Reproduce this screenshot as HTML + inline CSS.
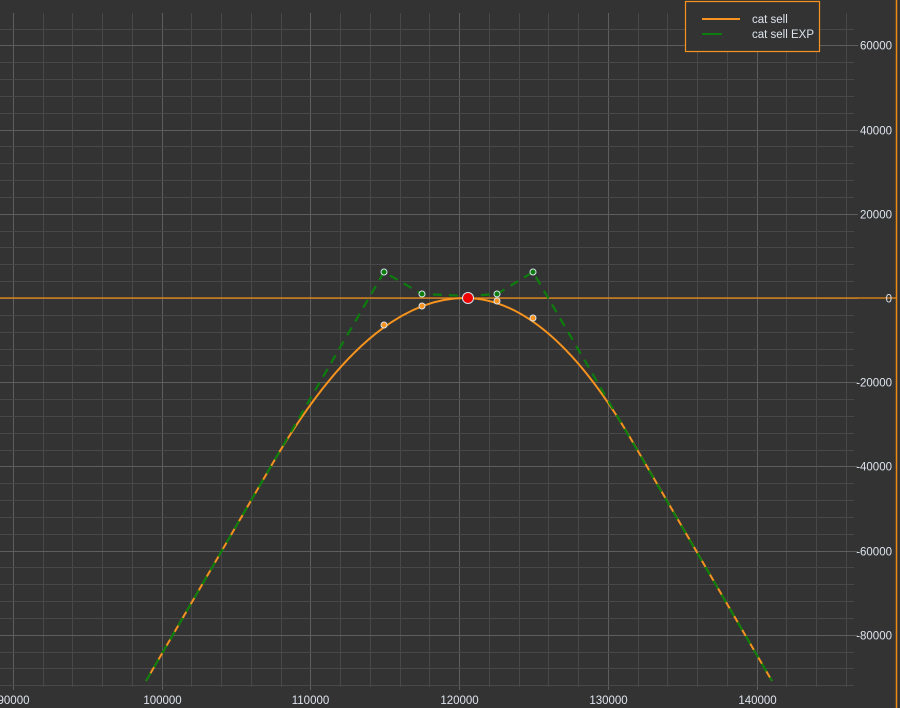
<!DOCTYPE html>
<html><head><style>
html,body{margin:0;padding:0;background:#323232;width:900px;height:708px;overflow:hidden}
svg{display:block}
text{font-family:"Liberation Sans",sans-serif;font-size:11.5px;fill:#dde4ee}
</style></head><body>
<svg id="s" width="900" height="708" xmlns="http://www.w3.org/2000/svg">
<rect width="900" height="708" fill="#333333"/>
<g id="grid"></g>
<line x1="0" y1="298" x2="896" y2="298" stroke="#f08a10" stroke-width="1.2"/>
<line x1="896.5" y1="0" x2="896.5" y2="708" stroke="#f08a10" stroke-width="1.5"/>
<path d="M146,681 L273,462.8 Q369,298 465,298 Q549,298 633,442.5 L772,681" fill="none" stroke="#f7931e" stroke-width="2"/>
<polyline points="146,681 384,272 422,294 468,296 497,294 533,272 772,681" fill="none" stroke="#0d7d0d" stroke-width="2.2" stroke-dasharray="9,7"/>
<g stroke="#d8e4ee" stroke-width="1">
<circle cx="384" cy="272" r="3" fill="#0d7d0d"/>
<circle cx="422" cy="294" r="3" fill="#0d7d0d"/>
<circle cx="497" cy="294" r="3" fill="#0d7d0d"/>
<circle cx="533" cy="272" r="3" fill="#0d7d0d"/>
<circle cx="384" cy="325" r="3" fill="#f7931e"/>
<circle cx="422" cy="306" r="3" fill="#f7931e"/>
<circle cx="497" cy="301" r="3" fill="#f7931e"/>
<circle cx="533" cy="318" r="3" fill="#f7931e"/>
<circle cx="468" cy="298" r="5.5" fill="#ee0000"/>
</g>
<rect x="685.5" y="1.5" width="134" height="50" fill="#333333" stroke="#f7931e" stroke-width="1.2"/>
<line x1="702" y1="19" x2="740" y2="19" stroke="#f7931e" stroke-width="2"/>
<line x1="702" y1="34" x2="722" y2="34" stroke="#0d7d0d" stroke-width="2"/>
<text x="752" y="23">cat sell</text>
<text x="752" y="38">cat sell EXP</text>
<g id="labels"></g>
</svg>
<script>
var g=document.getElementById('grid'),l=document.getElementById('labels'),ns='http://www.w3.org/2000/svg';
function ln(x1,y1,x2,y2,c){var e=document.createElementNS(ns,'line');e.setAttribute('x1',x1);e.setAttribute('y1',y1);e.setAttribute('x2',x2);e.setAttribute('y2',y2);e.setAttribute('stroke',c);e.setAttribute('stroke-width',1);g.appendChild(e);}
function tx(x,y,s,a){var e=document.createElementNS(ns,'text');e.setAttribute('x',x);e.setAttribute('y',y);if(a)e.setAttribute('text-anchor',a);e.textContent=s;l.appendChild(e);}
var ppx=14.87;
for(var v=88000;v<=148000;v+=2000){var x=Math.round(13+(v-90000)/1000*ppx)+0.5;if(x>855)break;var maj=v%10000==0;ln(x,13,x,maj?690:687,maj?'#5e5e5e':'#484848');if(maj)tx(x,704,String(v),'middle');}
var ppy=84.2/20000;
for(var w=72000;w>=-96000;w-=4000){var y=Math.round(298-w*ppy)+0.5;if(y<13||y>688)continue;var maj=w%20000==0;ln(0,y,maj?858:854,y,maj?'#5e5e5e':'#484848');if(maj)tx(892,y+4,String(w),'end');}
</script>
</body></html>
